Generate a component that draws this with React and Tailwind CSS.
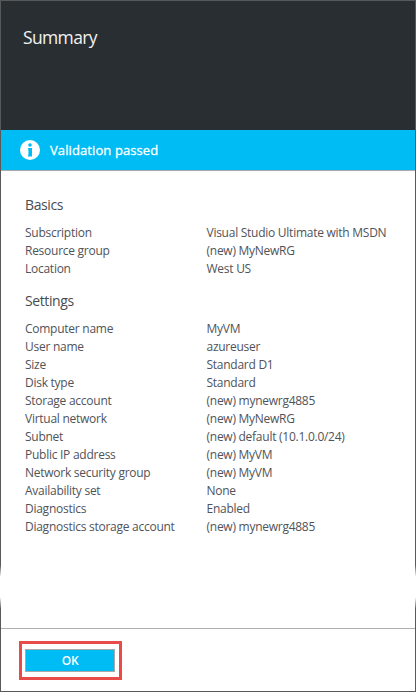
const basics = [
  ['Subscription', 'Visual Studio Ultimate with MSDN'],
  ['Resource group', '(new) MyNewRG'],
  ['Location', 'West US'],
];

const settings = [
  ['Computer name', 'MyVM'],
  ['User name', 'azureuser'],
  ['Size', 'Standard D1'],
  ['Disk type', 'Standard'],
  ['Storage account', '(new) mynewrg4885'],
  ['Virtual network', '(new) MyNewRG'],
  ['Subnet', '(new) default (10.1.0.0/24)'],
  ['Public IP address', '(new) MyVM'],
  ['Network security group', '(new) MyVM'],
  ['Availability set', 'None'],
  ['Diagnostics', 'Enabled'],
  ['Diagnostics storage account', '(new) mynewrg4885'],
];

function Section({ title, rows }) {
  return (
    <section>
      <h2 className="h-5 text-[14px] leading-5 tracking-[-0.4px] text-[#494c52]">{title}</h2>
      <dl className="mt-[9px]">
        {rows.map(([label, value]) => (
          <div key={label} className="flex h-[18px] text-[12px] leading-[18px] tracking-[-0.26px] whitespace-nowrap text-[#505359]">
            <dt className="w-[181.5px] shrink-0">{label}</dt>
            <dd>{value}</dd>
          </div>
        ))}
      </dl>
    </section>
  );
}

// Side edge of the blade, faded out where the content is cut.
function Edge() {
  return (
    <div className="w-px shrink-0 bg-[linear-gradient(to_bottom,#58595b_565px,#ffffff_577px,#ffffff_597px,#58595b_609px)]" />
  );
}

function InfoIcon() {
  return (
    <svg className="size-5 shrink-0" viewBox="0 0 20 20" aria-hidden="true">
      <circle cx="10" cy="10" r="10" fill="#fff" />
      <circle cx="10" cy="5" r="1.8" fill="#00bcf5" />
      <path d="M8 8h4v8.5H8z" fill="#00bcf5" />
      <path d="M8 9.3h.8v5.9H8z" fill="#fff" opacity=".5" />
    </svg>
  );
}

export default function App() {
  return (
    <div className="flex h-[692px] w-[416px] bg-white font-['Open_Sans','Noto_Sans',sans-serif]">
      <Edge />
      <main className="flex min-w-0 flex-1 flex-col border-y border-[#58595b]">
        <header className="h-[129px] bg-[#292e32] pt-6 pl-[22px]">
          <h1 className="text-[17.5px] leading-6 tracking-[-0.65px] text-[#f2f2f2]">Summary</h1>
        </header>
        <div className="flex h-[41px] items-center gap-[10px] border-b border-[#aaaaaa] bg-[#00bcf5] pl-[19px] text-white">
          <InfoIcon />
          <span className="text-[13px] leading-5 tracking-[0.1px] [-webkit-text-stroke:0.3px_white]">Validation passed</span>
        </div>
        <div className="flex flex-1 flex-col gap-[13px] pt-6 pl-6">
          <Section title="Basics" rows={basics} />
          <Section title="Settings" rows={settings} />
        </div>
        <footer className="h-[63px] border-t border-[#b0b0b0] pt-3 pl-[18px]">
          <div className="h-[39px] w-[103px] border-3 border-[#e94b48] px-[3px] py-[5px]">
            <button className="block h-[23px] w-[90px] border border-[#aaaaaa] bg-[#00bcf5] text-[12px] leading-[21px] font-semibold tracking-[-0.3px] text-white">
              OK
            </button>
          </div>
        </footer>
      </main>
      <Edge />
    </div>
  );
}
